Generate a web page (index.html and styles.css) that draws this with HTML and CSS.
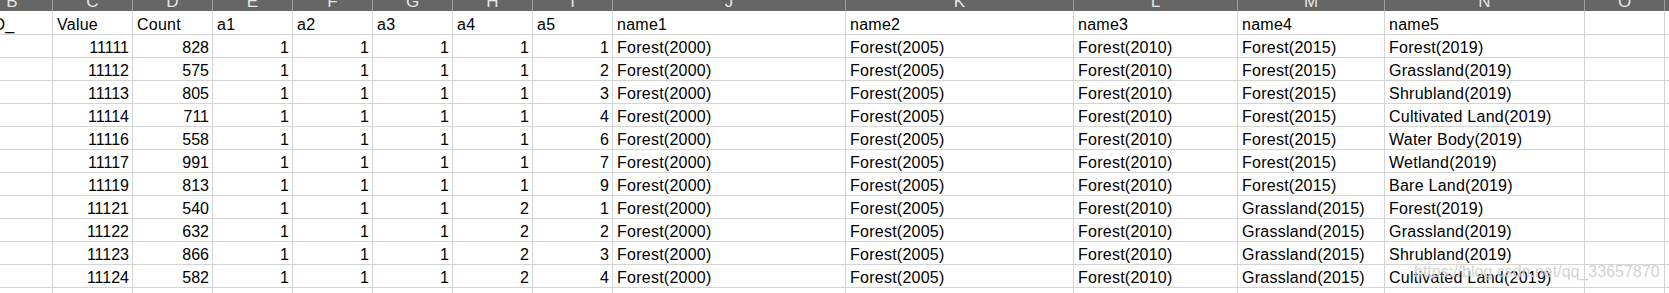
FILE: index.html
```html
<!DOCTYPE html>
<html>
<head>
<meta charset="utf-8">
<link rel="stylesheet" href="styles.css">
</head>
<body>
<div class="sheet">
  <div class="colbar">
    <div class="ch">B</div><div class="ch">C</div><div class="ch">D</div><div class="ch">E</div><div class="ch">F</div><div class="ch">G</div><div class="ch">H</div><div class="ch">I</div><div class="ch">J</div><div class="ch">K</div><div class="ch">L</div><div class="ch">M</div><div class="ch">N</div><div class="ch">O</div><div class="ch">P</div>
  </div>
  <div class="row first">
    <div class="c">OID_</div><div class="c">Value</div><div class="c">Count</div><div class="c">a1</div><div class="c">a2</div><div class="c">a3</div><div class="c">a4</div><div class="c">a5</div><div class="c">name1</div><div class="c">name2</div><div class="c">name3</div><div class="c">name4</div><div class="c">name5</div><div class="c"></div><div class="c"></div>
  </div>
  <div class="row"><div class="c"></div><div class="c n">11111</div><div class="c n">828</div><div class="c n">1</div><div class="c n">1</div><div class="c n">1</div><div class="c n">1</div><div class="c n">1</div><div class="c">Forest(2000)</div><div class="c">Forest(2005)</div><div class="c">Forest(2010)</div><div class="c">Forest(2015)</div><div class="c">Forest(2019)</div><div class="c"></div><div class="c"></div></div>
  <div class="row"><div class="c"></div><div class="c n">11112</div><div class="c n">575</div><div class="c n">1</div><div class="c n">1</div><div class="c n">1</div><div class="c n">1</div><div class="c n">2</div><div class="c">Forest(2000)</div><div class="c">Forest(2005)</div><div class="c">Forest(2010)</div><div class="c">Forest(2015)</div><div class="c">Grassland(2019)</div><div class="c"></div><div class="c"></div></div>
  <div class="row"><div class="c"></div><div class="c n">11113</div><div class="c n">805</div><div class="c n">1</div><div class="c n">1</div><div class="c n">1</div><div class="c n">1</div><div class="c n">3</div><div class="c">Forest(2000)</div><div class="c">Forest(2005)</div><div class="c">Forest(2010)</div><div class="c">Forest(2015)</div><div class="c">Shrubland(2019)</div><div class="c"></div><div class="c"></div></div>
  <div class="row"><div class="c"></div><div class="c n">11114</div><div class="c n">711</div><div class="c n">1</div><div class="c n">1</div><div class="c n">1</div><div class="c n">1</div><div class="c n">4</div><div class="c">Forest(2000)</div><div class="c">Forest(2005)</div><div class="c">Forest(2010)</div><div class="c">Forest(2015)</div><div class="c">Cultivated Land(2019)</div><div class="c"></div><div class="c"></div></div>
  <div class="row"><div class="c"></div><div class="c n">11116</div><div class="c n">558</div><div class="c n">1</div><div class="c n">1</div><div class="c n">1</div><div class="c n">1</div><div class="c n">6</div><div class="c">Forest(2000)</div><div class="c">Forest(2005)</div><div class="c">Forest(2010)</div><div class="c">Forest(2015)</div><div class="c">Water Body(2019)</div><div class="c"></div><div class="c"></div></div>
  <div class="row"><div class="c"></div><div class="c n">11117</div><div class="c n">991</div><div class="c n">1</div><div class="c n">1</div><div class="c n">1</div><div class="c n">1</div><div class="c n">7</div><div class="c">Forest(2000)</div><div class="c">Forest(2005)</div><div class="c">Forest(2010)</div><div class="c">Forest(2015)</div><div class="c">Wetland(2019)</div><div class="c"></div><div class="c"></div></div>
  <div class="row"><div class="c"></div><div class="c n">11119</div><div class="c n">813</div><div class="c n">1</div><div class="c n">1</div><div class="c n">1</div><div class="c n">1</div><div class="c n">9</div><div class="c">Forest(2000)</div><div class="c">Forest(2005)</div><div class="c">Forest(2010)</div><div class="c">Forest(2015)</div><div class="c">Bare Land(2019)</div><div class="c"></div><div class="c"></div></div>
  <div class="row"><div class="c"></div><div class="c n">11121</div><div class="c n">540</div><div class="c n">1</div><div class="c n">1</div><div class="c n">1</div><div class="c n">2</div><div class="c n">1</div><div class="c">Forest(2000)</div><div class="c">Forest(2005)</div><div class="c">Forest(2010)</div><div class="c">Grassland(2015)</div><div class="c">Forest(2019)</div><div class="c"></div><div class="c"></div></div>
  <div class="row"><div class="c"></div><div class="c n">11122</div><div class="c n">632</div><div class="c n">1</div><div class="c n">1</div><div class="c n">1</div><div class="c n">2</div><div class="c n">2</div><div class="c">Forest(2000)</div><div class="c">Forest(2005)</div><div class="c">Forest(2010)</div><div class="c">Grassland(2015)</div><div class="c">Grassland(2019)</div><div class="c"></div><div class="c"></div></div>
  <div class="row"><div class="c"></div><div class="c n">11123</div><div class="c n">866</div><div class="c n">1</div><div class="c n">1</div><div class="c n">1</div><div class="c n">2</div><div class="c n">3</div><div class="c">Forest(2000)</div><div class="c">Forest(2005)</div><div class="c">Forest(2010)</div><div class="c">Grassland(2015)</div><div class="c">Shrubland(2019)</div><div class="c"></div><div class="c"></div></div>
  <div class="row"><div class="c"></div><div class="c n">11124</div><div class="c n">582</div><div class="c n">1</div><div class="c n">1</div><div class="c n">1</div><div class="c n">2</div><div class="c n">4</div><div class="c">Forest(2000)</div><div class="c">Forest(2005)</div><div class="c">Forest(2010)</div><div class="c">Grassland(2015)</div><div class="c">Cultivated Land(2019)</div><div class="c"></div><div class="c"></div></div>
  <div class="row"><div class="c"></div><div class="c"></div><div class="c"></div><div class="c"></div><div class="c"></div><div class="c"></div><div class="c"></div><div class="c"></div><div class="c"></div><div class="c"></div><div class="c"></div><div class="c"></div><div class="c"></div><div class="c"></div><div class="c"></div></div>
  <div class="watermark">https://blog.csdn.net/qq_33657870</div>
</div>
</body>
</html>
```
FILE: styles.css
```css
html, body {
  margin: 0;
  padding: 0;
  background: #ffffff;
  overflow: hidden;
}
body {
  width: 1669px;
  height: 293px;
}
.sheet {
  position: relative;
  margin-left: -28px;
  width: 1697px;
  height: 293px;
  overflow: hidden;
  font-family: "Liberation Sans", Arial, sans-serif;
  font-size: 16px;
  color: #000;
}
.colbar, .row {
  display: grid;
  grid-template-columns: 81px repeat(7, 80px) 233px 228px 164px 147px 200px 80px 80px;
}
.colbar {
  height: 11px;
  background: #666666;
  overflow: hidden;
}
.ch {
  box-sizing: border-box;
  border-right: 1px solid #9c9c9c;
  text-align: center;
  color: #e4e4e4;
  font-size: 17px;
  line-height: 4px;
  overflow: hidden;
}
.row {
  height: 23px;
}
.row.first {
  height: 24px;
}
.c {
  box-sizing: border-box;
  border-right: 1px solid #d4d4d4;
  border-bottom: 1px solid #d4d4d4;
  padding: 0 3px 0 4px;
  display: flex;
  align-items: flex-end;
  line-height: 18px;
  letter-spacing: 0.25px;
  white-space: nowrap;
  overflow: visible;
}
.c.n {
  justify-content: flex-end;
  letter-spacing: 0;
}
.watermark {
  position: absolute;
  left: 1442px;
  top: 263px;
  font-size: 16px;
  color: rgba(170, 170, 170, 0.55);
  text-shadow: 0 0 1px rgba(255, 255, 255, 0.9);
  white-space: nowrap;
}
```
